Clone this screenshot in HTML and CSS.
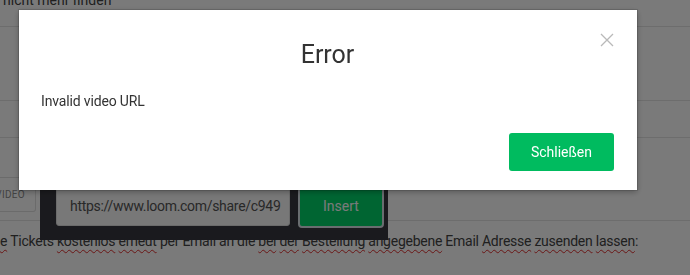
FILE: index.html
```html
<!DOCTYPE html>
<html lang="de">
<head>
  <meta charset="UTF-8" />
  <meta name="viewport" content="width=device-width, initial-scale=1" />
  <title>Error</title>
  <link rel="stylesheet" href="styles.css">
</head>
<body>

  <div class="page">
    <div class="top-row"><span>nicht mehr finden</span></div>
    <div class="row row-tall"></div>
    <div class="row row-short"></div>
    <div class="toolbar">
      <div class="video-btn">Video</div>
    </div>
    <p class="para"><span class="sp">e</span> Tickets <span class="sp">kostenlos</span> <span class="sp">erneut</span> per Email an die <span class="sp">bei</span> <span class="sp">der</span> <span class="sp">Bestellung</span> <span class="sp">angegebene</span> Email <span class="sp">Adresse</span> <span class="sp">zusenden</span> <span class="sp">lassen</span>:</p>

    <div class="popover">
      <div class="url-input">https://www.loom.com/share/c949</div>
      <button class="insert-btn">Insert</button>
    </div>
  </div>

  <div class="backdrop"></div>

  <div class="modal">
    <h2 class="modal-title">Error</h2>
    <svg class="close" width="14" height="14" viewBox="0 0 14 14">
      <path d="M1 1 L13 13 M13 1 L1 13" stroke="#b9b9b9" stroke-width="1.3" fill="none" />
    </svg>
    <p class="modal-body">Invalid video URL</p>
    <div class="modal-footer">
      <button class="close-btn">Schließen</button>
    </div>
  </div>

</body>
</html>
```

FILE: styles.css
```css
body {
  margin: 0;
  font-family: Roboto, "Noto Sans", sans-serif;
  background: #fff;
  color: #444;
  height: 275px;
  overflow: hidden;
}
.page {
  position: relative;
}
.top-row {
  height: 27px;
  box-sizing: border-box;
  border-bottom: 1px solid #e4e4e4;
  padding-left: 3px;
  font-size: 14px;
  line-height: 14px;
  overflow: hidden;
}
.top-row span {
  display: block;
  margin-top: -7px;
}
.row {
  box-sizing: border-box;
  border-bottom: 1px solid #e4e4e4;
}
.row-tall {
  height: 74px;
}
.row-short {
  height: 37px;
}
.toolbar {
  height: 83px;
  box-sizing: border-box;
  border-bottom: 1px solid #e4e4e4;
  padding-top: 39px;
}
.video-btn {
  width: 36px;
  height: 35px;
  box-sizing: border-box;
  border: 1px solid #e0e0e0;
  border-left: none;
  border-radius: 0 3px 3px 0;
  text-transform: uppercase;
  font-size: 10px;
  letter-spacing: 0.3px;
  line-height: 33px;
  color: #8a8a8a;
  display: flex;
  justify-content: flex-end;
  padding-right: 10px;
  overflow: hidden;
  white-space: nowrap;
}
.para {
  margin: 12px 0 0 0;
  font-size: 14px;
  letter-spacing: -0.25px;
  white-space: nowrap;
}
.sp {
  text-decoration: underline wavy #e03030;
  text-decoration-thickness: 1px;
  text-underline-offset: 3px;
}
.popover {
  position: absolute;
  left: 40px;
  top: 172px;
  width: 348px;
  height: 68px;
  box-sizing: border-box;
  background: #38383f;
  padding: 14px 4px 12px 16px;
  display: flex;
  gap: 8px;
  align-items: flex-end;
}
.popover::before {
  content: "";
  position: absolute;
  left: -6px;
  top: 3px;
  border-right: 6px solid #38383f;
  border-top: 6px solid transparent;
  border-bottom: 6px solid transparent;
}
.url-input {
  width: 234px;
  height: 40px;
  box-sizing: border-box;
  background: #fafafa;
  border: 1px solid #e0e0e0;
  border-radius: 3px;
  padding-left: 13px;
  line-height: 38px;
  font-size: 14px;
  letter-spacing: -0.3px;
  color: #555;
  margin-bottom: 2px;
  white-space: nowrap;
  overflow: hidden;
}
.insert-btn {
  width: 86px;
  height: 44px;
  border: 2px solid #dce3ea;
  border-radius: 4px;
  background: #00d46a;
  color: #fff;
  font-family: inherit;
  font-size: 14px;
}
.backdrop {
  position: fixed;
  inset: 0;
  background: rgba(0, 0, 0, 0.52);
}
.modal {
  position: fixed;
  left: 19px;
  top: 10px;
  width: 618px;
  height: 180px;
  box-sizing: border-box;
  background: #fff;
  box-shadow: 0 0 0 1px rgba(0, 0, 0, 0.12), 0 2px 6px rgba(0, 0, 0, 0.3);
  padding: 30px 23px 0 22px;
}
.modal-title {
  margin: 0;
  text-align: center;
  font-size: 25px;
  line-height: 30px;
  font-weight: 400;
  color: #333;
}
.close {
  position: absolute;
  left: 581px;
  top: 23px;
}
.modal-body {
  margin: 21px 0 0 0;
  font-size: 14px;
  line-height: 20px;
  letter-spacing: -0.15px;
  color: #333;
}
.modal-footer {
  display: flex;
  justify-content: flex-end;
  margin-top: 22px;
}
.close-btn {
  width: 105px;
  height: 38px;
  border: none;
  border-radius: 3px;
  background: #00bb5f;
  color: #fff;
  font-family: inherit;
  font-size: 14px;
}
```
